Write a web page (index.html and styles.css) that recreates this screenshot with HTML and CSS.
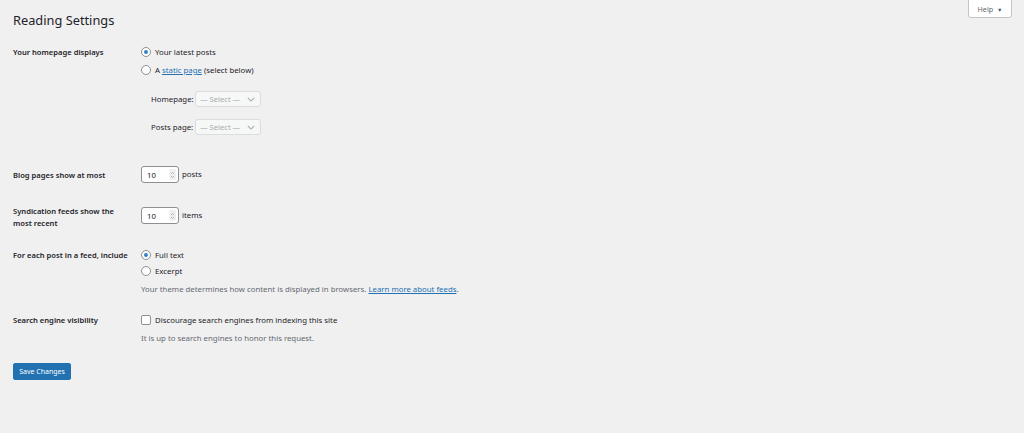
FILE: index.html
```html
<!DOCTYPE html>
<html lang="en">
<head>
    <meta charset="UTF-8">
    <title>Reading Settings</title>
    <link rel="stylesheet" href="styles.css">
</head>
<body>
    <div class="help-tab">Help <span class="caret">&#9660;</span></div>

    <div class="wrap">
        <h1>Reading Settings</h1>

        <div class="form-table">
            <!-- homepage -->
            <div class="row row-front">
                <div class="th">Your homepage displays</div>
                <div class="td">
                    <div class="choice"><span class="radio checked"></span><span>Your latest posts</span></div>
                    <div class="choice"><span class="radio"></span><span>A <a href="#">static page</a> (select below)</span></div>
                    <div class="page-select">
                        <span class="sel-label">Homepage:</span>
                        <span class="select">&mdash; Select &mdash;
                            <svg class="chev" viewBox="0 0 10 6" width="8" height="5"><path d="M1 1l4 4 4-4" fill="none" stroke="#a7aaad" stroke-width="1.3"/></svg>
                        </span>
                    </div>
                    <div class="page-select">
                        <span class="sel-label">Posts page:</span>
                        <span class="select">&mdash; Select &mdash;
                            <svg class="chev" viewBox="0 0 10 6" width="8" height="5"><path d="M1 1l4 4 4-4" fill="none" stroke="#a7aaad" stroke-width="1.3"/></svg>
                        </span>
                    </div>
                </div>
            </div>

            <div class="row row-blog">
                <div class="th">Blog pages show at most</div>
                <div class="td inline">
                    <span class="number">10
                        <span class="spin"><svg viewBox="0 0 8 12" width="5" height="8"><path d="M1.5 4.5L4 2l2.5 2.5M1.5 7.5L4 10l2.5-2.5" fill="none" stroke="#8c8f94" stroke-width="1"/></svg></span>
                    </span>
                    <span>posts</span>
                </div>
            </div>

            <div class="row row-feeds">
                <div class="th">Syndication feeds show the most recent</div>
                <div class="td inline">
                    <span class="number">10
                        <span class="spin"><svg viewBox="0 0 8 12" width="5" height="8"><path d="M1.5 4.5L4 2l2.5 2.5M1.5 7.5L4 10l2.5-2.5" fill="none" stroke="#8c8f94" stroke-width="1"/></svg></span>
                    </span>
                    <span>items</span>
                </div>
            </div>

            <div class="row row-excerpt">
                <div class="th">For each post in a feed, include</div>
                <div class="td">
                    <div class="choice"><span class="radio checked"></span><span>Full text</span></div>
                    <div class="choice"><span class="radio"></span><span>Excerpt</span></div>
                    <p class="description">Your theme determines how content is displayed in browsers. <a href="#">Learn more about feeds</a>.</p>
                </div>
            </div>

            <div class="row row-search">
                <div class="th">Search engine visibility</div>
                <div class="td">
                    <div class="choice"><span class="checkbox"></span><span>Discourage search engines from indexing this site</span></div>
                    <p class="description">It is up to search engines to honor this request.</p>
                </div>
            </div>
        </div>

        <div class="submit">
            <button class="button-primary">Save Changes</button>
        </div>
    </div>
</body>
</html>
```

FILE: styles.css
```css
body {
    margin: 0;
    background: #f0f0f1;
    color: #1d2327;
    font-family: "Noto Sans", sans-serif;
    font-size: 7.8px;
    line-height: 12px;
}

a {
    color: #2271b1;
    text-decoration: underline;
}

.help-tab {
    position: absolute;
    top: -1px;
    right: 12px;
    width: 44px;
    height: 19px;
    box-sizing: border-box;
    background: #fff;
    border: 1px solid #c3c4c7;
    border-radius: 0 0 3px 3px;
    color: #646970;
    font-size: 7.2px;
    line-height: 18px;
    text-align: center;
}

.help-tab .caret {
    font-size: 5.5px;
    margin-left: 2px;
    color: #50575e;
}

.wrap {
    padding: 0 13px;
}

h1 {
    margin: 0;
    padding-top: 10px;
    font-size: 12.8px;
    font-weight: 400;
    line-height: 20px;
}

.form-table {
    margin-top: 16px;
}

.row {
    display: grid;
    grid-template-columns: 128px 1fr;
}

.th {
    width: 118px;
    font-weight: 600;
    font-size: 7.6px;
}

/* vertical rhythm between rows */
.row-blog {
    margin-top: 31px;
}

.row-blog .th {
    padding-top: 3px;
}

.row-feeds {
    margin-top: 22px;
}

.row-feeds .number {
    margin-top: 2px;
}

.row-excerpt {
    margin-top: 20px;
}

.row-search {
    margin-top: 19px;
}

.td.inline {
    display: flex;
    align-items: flex-start;
}

.td.inline > span:last-child {
    line-height: 17px;
}

.row-feeds .td.inline > span:last-child {
    margin-top: 2px;
}

.choice {
    display: flex;
    align-items: center;
    height: 12px;
}

.choice + .choice {
    margin-top: 4px;
}

.row-front .choice + .choice {
    margin-top: 6px;
}

.radio,
.checkbox {
    display: inline-block;
    box-sizing: border-box;
    width: 10px;
    height: 10px;
    margin-right: 4px;
    background: #fff;
    border: 1px solid #8c8f94;
    border-radius: 50%;
    position: relative;
    flex: none;
}

.checkbox {
    border-radius: 2px;
}

.radio.checked::after {
    content: "";
    position: absolute;
    left: 2px;
    top: 2px;
    width: 4px;
    height: 4px;
    border-radius: 50%;
    background: #3582c4;
}

.page-select {
    display: flex;
    align-items: center;
    margin-left: 10px;
}

.page-select + .page-select {
    margin-top: 12px;
}

.row-front .choice + .page-select {
    margin-top: 15px;
}

.sel-label {
    width: 44px;
    white-space: nowrap;
}

.select {
    display: inline-flex;
    align-items: center;
    justify-content: space-between;
    box-sizing: border-box;
    width: 66px;
    height: 16px;
    padding: 0 5px 0 4px;
    background: #f6f7f7;
    border: 1px solid #dcdcde;
    border-radius: 3px;
    color: #a7aaad;
    font-size: 7.6px;
}

.number {
    display: inline-flex;
    align-items: center;
    justify-content: space-between;
    box-sizing: border-box;
    width: 38px;
    height: 17px;
    padding: 0 2px 0 5px;
    margin-right: 3px;
    background: #fff;
    border: 1px solid #8c8f94;
    border-radius: 3px;
}

.spin {
    display: flex;
    align-items: center;
    justify-content: center;
    width: 7px;
    height: 11px;
    background: #f0f0f1;
    border-radius: 1px;
}

.description {
    margin: 6px 0 0;
    color: #646970;
}

.submit {
    margin-top: 19px;
}

.button-primary {
    display: block;
    box-sizing: border-box;
    width: 58px;
    height: 17px;
    padding: 0;
    background: #2271b1;
    border: 1px solid #2271b1;
    border-radius: 2px;
    color: #fff;
    font-family: inherit;
    font-size: 7px;
    line-height: 15px;
}
```
